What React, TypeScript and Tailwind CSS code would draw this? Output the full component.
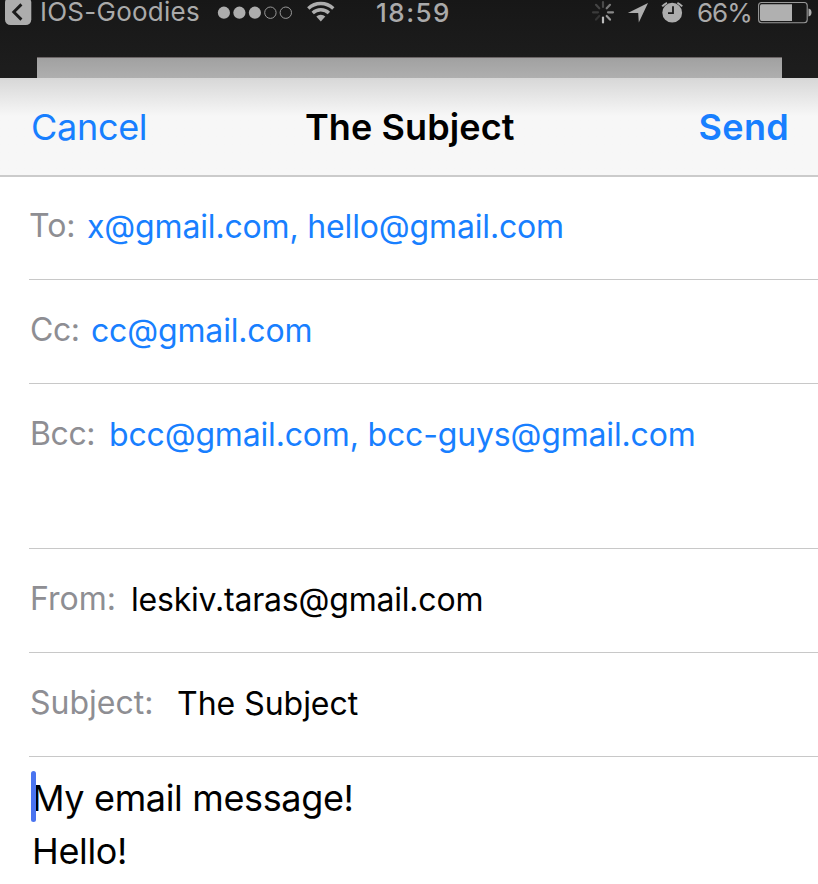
import type { ReactNode } from 'react';

function StatusBar() {
  return (
    <div className="h-[58px] text-[#aaaaaa]">
      <div className="flex h-[25px] items-start">
        <svg className="ml-[5px] h-[25px] w-[27px]" viewBox="0 0 27 25">
          <rect x="0" y="-3" width="26.3" height="28" rx="5.5" fill="#adadad" />
          <path d="M16.4 4.4 8.8 12 16.4 19.6" fill="none" stroke="#1b1b1b" strokeWidth="2.9" />
        </svg>
        <span className="ml-[8px] w-[177px] whitespace-nowrap text-[26px] leading-[24px] tracking-[0.25px]">
          IOS-Goodies
        </span>
        <svg className="h-[25px] w-[77px]" viewBox="0 0 77 25">
          <circle cx="6.9" cy="12.7" r="6.1" fill="#adadad" />
          <circle cx="22.4" cy="12.7" r="6.1" fill="#adadad" />
          <circle cx="37.9" cy="12.7" r="6.1" fill="#adadad" />
          <circle cx="53.4" cy="12.7" r="5.7" fill="none" stroke="#999" strokeWidth="1" />
          <circle cx="68.8" cy="12.7" r="5.7" fill="none" stroke="#999" strokeWidth="1" />
        </svg>
        <svg className="ml-[13px] h-[25px] w-[28px]" viewBox="0 0 28 25">
          <g fill="none" stroke="#adadad" strokeWidth="3.4">
            <path d="M1.3 8.4A18.2 18.2 0 0 1 26.3 8.4" />
            <path d="M5.7 13A11.8 11.8 0 0 1 21.9 13" />
          </g>
          <path d="M9.3 16.6A6.4 6.4 0 0 1 18.3 16.6L13.8 21.5Z" fill="#adadad" />
        </svg>
        <span className="ml-[41px] w-[216px] whitespace-nowrap text-[26px] font-medium leading-[26px] tracking-[1.5px]">
          18:59
        </span>
        <svg className="h-[25px] w-[24px]" viewBox="0 0 24 25" fill="none" strokeWidth="2.2" strokeLinecap="round">
          <path d="M11 2V7" stroke="#4a4a4a" />
          <path d="M18 4.8 14.7 8.3" stroke="#777" />
          <path d="M16 12.3H21" stroke="#888" />
          <path d="M14.7 16 18 19.6" stroke="#999" />
          <path d="M11 17.5V22.5" stroke="#bbb" />
          <path d="M7.3 16 4 19.6" stroke="#333" />
          <path d="M6 12.3H1" stroke="#3b3b3b" />
          <path d="M7.3 8.3 4 4.8" stroke="#444" />
        </svg>
        <svg className="ml-[11px] h-[25px] w-[22px]" viewBox="0 0 22 25">
          <path d="M21 3 11.8 22.6 11.2 13H0.8Z" fill="#adadad" />
        </svg>
        <svg className="ml-[11px] h-[25px] w-[24px]" viewBox="0 0 24 25">
          <circle cx="12.2" cy="12.7" r="9.9" fill="#adadad" />
          <path d="M2.2 6.4A13 13 0 0 1 7 2.8M17.4 2.8A13 13 0 0 1 22.2 6.4" fill="none" stroke="#adadad" strokeWidth="2" />
          <path d="M13 6.3V13.2H8" fill="none" stroke="#1b1b1b" strokeWidth="1.8" />
        </svg>
        <span className="ml-[13px] w-[61px] whitespace-nowrap text-[26px] leading-[26px] tracking-[-1px]">
          66%
        </span>
        <svg className="h-[25px] w-[56px]" viewBox="0 0 56 25">
          <rect x="0.6" y="2.5" width="48.6" height="20.2" rx="3" fill="none" stroke="#999" strokeWidth="1.1" />
          <path d="M3.5 4.2H34V21H3.5Q2 21 2 19V6Q2 4.2 3.5 4.2Z" fill="#b0b0b0" />
          <path d="M50.5 8.6Q53.5 9.2 53.5 12.5T50.5 16.5Z" fill="#adadad" />
        </svg>
      </div>
    </div>
  );
}

function NavBar() {
  return (
    <header className="flex h-[99px] justify-between border-b-2 border-[#cbcbcb] bg-linear-to-b from-[#d7d7d7] to-[#f7f7f7] to-[38px] pl-[31px] pr-[29px] pt-[27px] text-[36px] leading-[44px]">
      <span className="w-[236px] tracking-[-0.3px] text-[#187fff]">Cancel</span>
      <h1 className="flex-1 whitespace-nowrap pl-[38px] font-semibold tracking-[0.1px] text-black">The Subject</h1>
      <span className="font-semibold tracking-[0.3px] text-[#187fff]">Send</span>
    </header>
  );
}

interface FieldProps {
  label: string;
  labelClass: string;
  rowClass: string;
  valueClass: string;
  children: ReactNode;
}

function Field({ label, labelClass, rowClass, valueClass, children }: FieldProps) {
  return (
    <div className={`ml-[29px] flex border-b border-[#c8c8c8] text-[32px] leading-[40px] whitespace-nowrap ${rowClass}`}>
      <span className={`text-[#8e8e93] ${labelClass}`}>{label}</span>
      <span className={`pt-px ${valueClass}`}>{children}</span>
    </div>
  );
}

export default function App() {
  return (
    <div className="h-[884px] w-[818px] overflow-hidden bg-white font-['Inter',sans-serif]">
      <div className="h-[78px] bg-linear-to-b from-[#171717] to-[#1e1e1e]">
        <StatusBar />
        <div className="ml-[37px] mt-[-1px] h-[21px] w-[745px] border-t border-[#6c6667] bg-linear-to-b from-[#a1a1a1] to-[#afafaf]" />
      </div>
      <NavBar />
      <Field label="To:" rowClass="h-[103px] pt-[29px]" labelClass="w-[58px]" valueClass="tracking-[-0.16px] text-[#187fff]">
        x@gmail.com, hello@gmail.com
      </Field>
      <Field label="Cc:" rowClass="h-[104px] pt-[30px]" labelClass="w-[62px] pl-px tracking-[-0.5px]" valueClass="tracking-[-0.16px] text-[#187fff]">
        cc@gmail.com
      </Field>
      <Field label="Bcc:" rowClass="h-[165px] pt-[30px]" labelClass="w-[80px] pl-px tracking-[-0.4px]" valueClass="tracking-[-0.17px] text-[#187fff]">
        bcc@gmail.com, bcc-guys@gmail.com
      </Field>
      <Field label="From:" rowClass="h-[104px] pt-[30px]" labelClass="w-[102px] pl-px" valueClass="tracking-[-0.2px] text-black">
        leskiv.taras@gmail.com
      </Field>
      <Field label="Subject:" rowClass="h-[104px] pt-[30px]" labelClass="w-[148px] pl-px" valueClass="tracking-[-0.02px] text-black">
        The Subject
      </Field>
      <div className="relative pl-[32px] pt-[15px] text-[36px] leading-[53px] tracking-[-0.35px] text-black">
        <p>My email message!</p>
        <p>Hello!</p>
        <span className="absolute left-[31px] top-[14px] h-[51px] w-[5px] rounded-full bg-[#4a74f0]" />
      </div>
    </div>
  );
}
